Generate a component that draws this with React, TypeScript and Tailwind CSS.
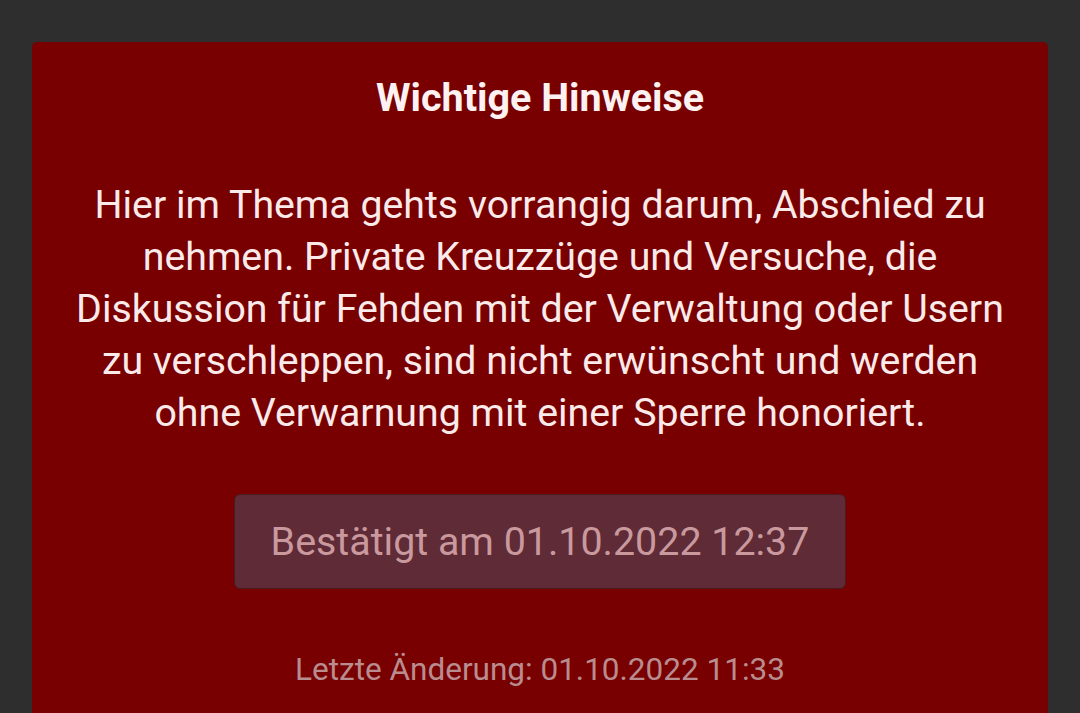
export default function App() {
  return (
    <div className="min-h-[713px] h-[713px] overflow-hidden bg-[#2e2e2e] pt-[42px] px-[32px]" style={{ fontFamily: "Roboto, 'Liberation Sans', sans-serif" }}>
      <div className="bg-[#780000] rounded-[5px] h-[720px] px-[38px] pt-[33px] flex flex-col items-center text-center">
        <h1 className="text-[39.5px] leading-[46px] font-bold text-[#fdf1f1]">Wichtige Hinweise</h1>
        <p className="mt-[58px] text-[39.3px] leading-[52px] text-[#fbeaea]">
          Hier im Thema gehts vorrangig darum, Abschied zu nehmen. Private Kreuzzüge und Versuche, die Diskussion für Fehden mit der Verwaltung oder Usern zu verschleppen, sind nicht erwünscht und werden ohne Verwarnung mit einer Sperre honoriert.
        </p>
        <div className="mt-[55px] w-[612px] h-[95px] shrink-0 rounded-[6px] bg-[#5e2b37] border border-[#4a1a22] flex items-center justify-center text-[39.4px] text-[#c9999d]">
          Bestätigt am 01.10.2022 12:37
        </div>
        <div className="mt-[61px] text-[31.5px] leading-[40px] text-[#b98d8f]">Letzte Änderung: 01.10.2022 11:33</div>
      </div>
    </div>
  );
}
